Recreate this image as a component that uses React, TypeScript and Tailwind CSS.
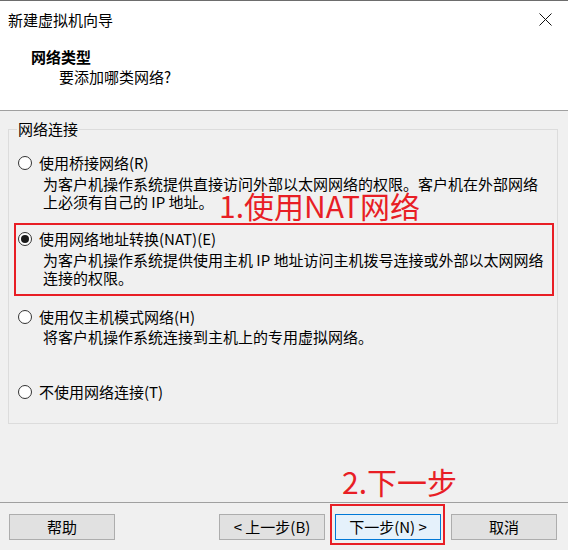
import React from "react";

const font = { fontFamily: '"Noto Sans CJK SC", "Microsoft YaHei", sans-serif' };

function Radio({ checked }: { checked?: boolean }) {
  return (
    <span className="flex h-[14px] w-[14px] shrink-0 items-center justify-center rounded-full border border-[#333333] bg-white">
      {checked && <span className="h-[8px] w-[8px] rounded-full bg-[#1a1a1a]" />}
    </span>
  );
}

function Option({
  label,
  desc,
  checked,
  className = "",
  descGap = "mt-[2px]",
}: {
  label: string;
  desc?: string[];
  checked?: boolean;
  className?: string;
  descGap?: string;
}) {
  return (
    <div className={"pl-[9px] " + className}>
      <div className="flex h-[20px] items-center gap-[7px]">
        <Radio checked={checked} />
        <span className="text-[15px] leading-[20px] text-black">{label}</span>
      </div>
      {desc && (
        <div className={"ml-[25px] " + descGap}>
          {desc.map((d) => (
            <div key={d} className="text-[15px] leading-[18px] text-black whitespace-nowrap">
              {d}
            </div>
          ))}
        </div>
      )}
    </div>
  );
}

function Btn({ children, primary }: { children: React.ReactNode; primary?: boolean }) {
  return (
    <button
      className={
        "flex h-[26px] w-[106px] items-center justify-center border text-[15px] leading-[20px] text-black " +
        (primary ? "border-[#0078d7] bg-[#e5f1fb]" : "border-[#adadad] bg-[#e1e1e1]")
      }
    >
      {children}
    </button>
  );
}

export default function App() {
  return (
    <div style={font} className="relative flex h-[550px] w-[568px] flex-col overflow-hidden bg-[#f0f0f0]">
      {/* header */}
      <div className="border-t border-b border-t-[#6d6d6d] border-b-[#a0a0a0] bg-white h-[111px]">
        <div className="flex h-[37px] items-center justify-between pl-[8px] pr-[16px]">
          <span className="text-[15px] leading-[20px] text-black">新建虚拟机向导</span>
          <svg width="13" height="13" viewBox="0 0 13 13">
            <path d="M0.5 0.5 L12.5 12.5 M12.5 0.5 L0.5 12.5" stroke="#111" strokeWidth="1" />
          </svg>
        </div>
        <div className="mt-[9px] pl-[31px] text-[15px] font-bold leading-[20px] text-black">网络类型</div>
        <div className="pl-[59px] text-[15px] leading-[20px] text-black">要添加哪类网络?</div>
      </div>

      {/* group box */}
      <fieldset className="ml-[8px] mt-[8px] h-[305px] w-[550px] border border-[#dcdcdc]">
        <legend className="ml-[8px] px-[1px] text-[15px] leading-[20px] text-black">网络连接</legend>
        <Option
          className="mt-[14px]"
          label="使用桥接网络(R)"
          desc={["为客户机操作系统提供直接访问外部以太网网络的权限。客户机在外部网络", "上必须有自己的 IP 地址。"]}
        />
        <Option
          className="mt-[18px]"
          checked
          label="使用网络地址转换(NAT)(E)"
          desc={["为客户机操作系统提供使用主机 IP 地址访问主机拨号连接或外部以太网网络", "连接的权限。"]}
        />
        <Option
          className="mt-[20px]"
          descGap="mt-[1px]"
          label="使用仅主机模式网络(H)"
          desc={["将客户机操作系统连接到主机上的专用虚拟网络。"]}
        />
        <Option className="mt-[36px]" label="不使用网络连接(T)" />
      </fieldset>

      <div className="flex-1" />

      {/* footer */}
      <div className="flex h-[48px] items-start justify-between border-t border-[#a0a0a0] pl-[9px] pr-[11px] pt-[11px]">
        <Btn>帮助</Btn>
        <div className="flex gap-[10px]">
          <Btn>&lt; 上一步(B)</Btn>
          <Btn primary>下一步(N) &gt;</Btn>
          <Btn>取消</Btn>
        </div>
      </div>

      {/* annotations */}
      <div className="absolute left-[14px] top-[223px] h-[73px] w-[540px] border-2 border-[#e81e25]" />
      <div className="absolute left-[219px] top-[187px] text-[30px] leading-[36px] text-[#e81e25]">1.使用NAT网络</div>
      <div className="absolute left-[330px] top-[504px] h-[41px] w-[115px] border-2 border-[#e81e25]" />
      <div className="absolute left-[342px] top-[463px] text-[30px] leading-[36px] text-[#e81e25]">2.下一步</div>
    </div>
  );
}
